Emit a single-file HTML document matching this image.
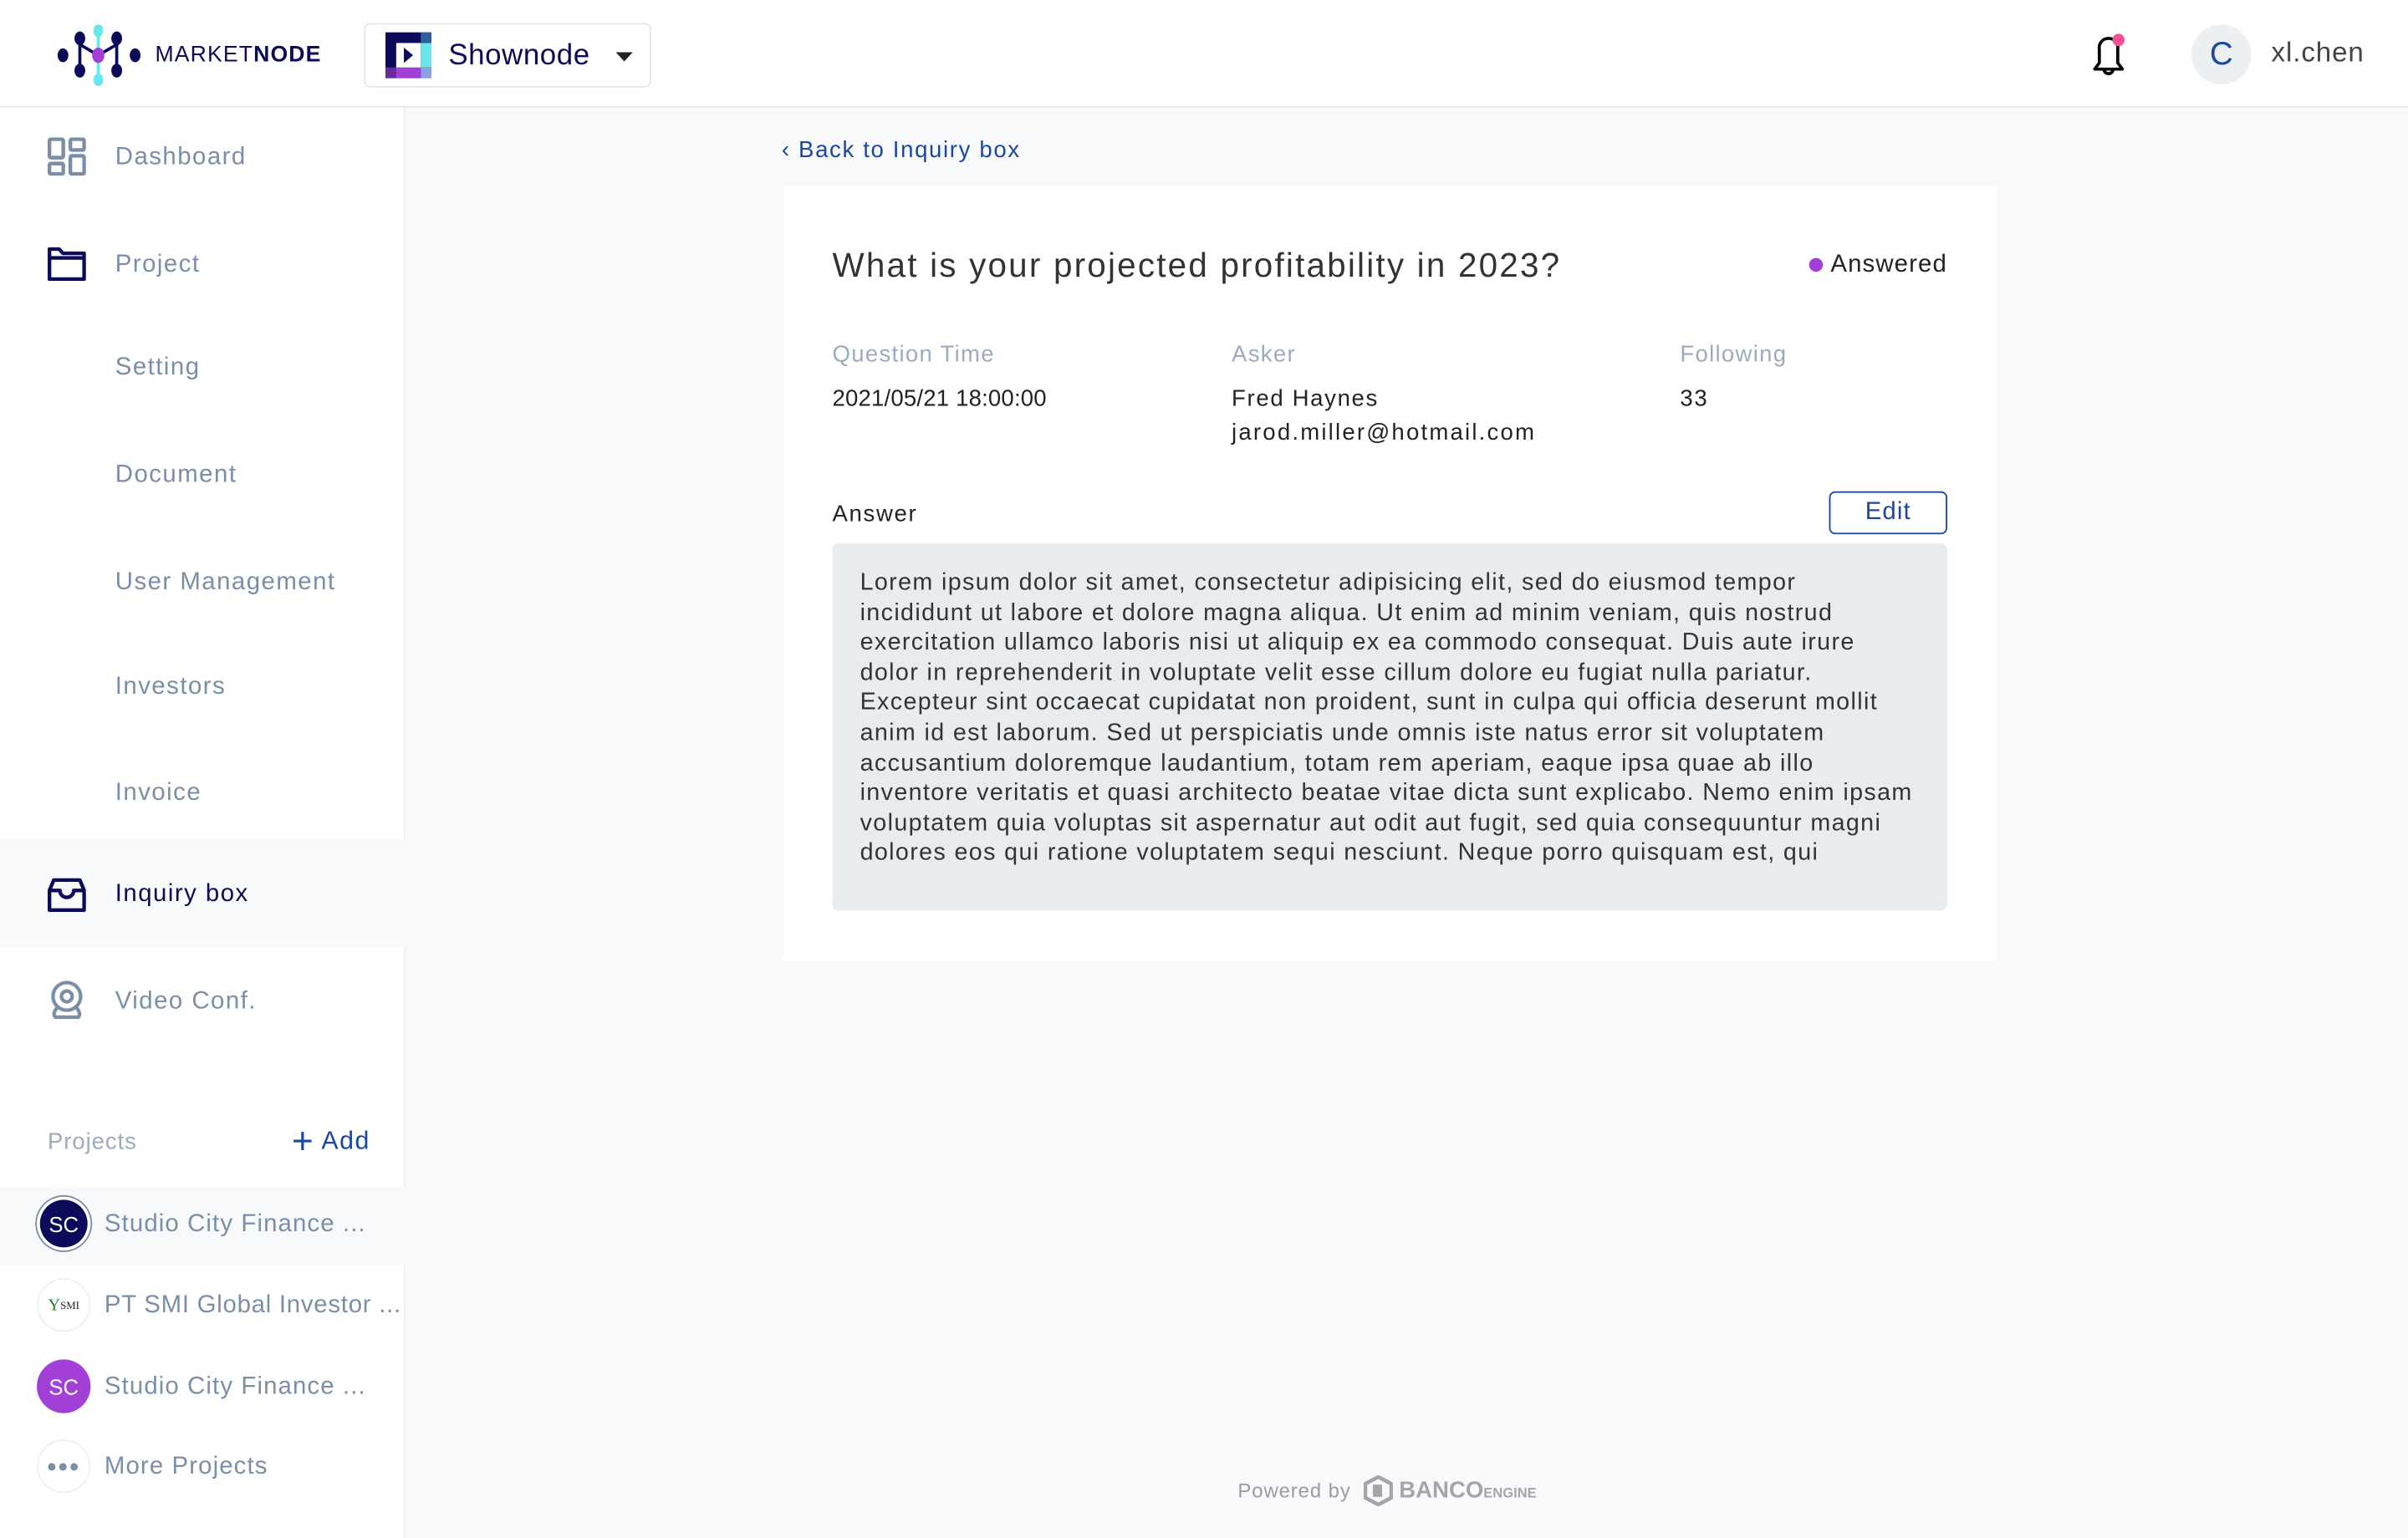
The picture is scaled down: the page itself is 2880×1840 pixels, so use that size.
<!DOCTYPE html>
<html><head><meta charset="utf-8"><style>
*{margin:0;padding:0;box-sizing:border-box}
html,body{width:2880px;height:1840px;overflow:hidden;background:#f7f9fb}
#w{width:1568px;height:1002px;transform:scale(1.836735);transform-origin:0 0;position:relative;font-family:"Liberation Sans",sans-serif;background:#f7f9fb}
.a{position:absolute;white-space:nowrap}
.hdr{position:absolute;left:0;top:0;width:1568px;height:70px;background:#fff;border-bottom:1px solid #e6e9ee}
.side{position:absolute;left:0;top:70px;width:264px;height:932px;background:#fff;border-right:1px solid #eceff3}
.nav{position:absolute;left:75px;font-size:16px;color:#7b8ea8;letter-spacing:.8px;transform:translateY(-45%)}
.ic{position:absolute;left:31px;transform:translateY(-50%)}
.av{position:absolute;left:24px;width:35px;height:35px;border-radius:50%;transform:translateY(-50%);display:flex;align-items:center;justify-content:center;font-size:14px;color:#fff}
.pt{position:absolute;left:68px;font-size:16px;color:#7b8ea8;letter-spacing:.6px;transform:translateY(-45%)}
.lbl{font-size:15px;color:#9aabc1;transform:translateY(-45%);letter-spacing:.7px}
.val{font-size:15px;color:#222;transform:translateY(-45%);letter-spacing:.9px}
.lorem{position:absolute;left:560px;top:370px;font-size:15.6px;line-height:19.6px;color:#333;white-space:nowrap;letter-spacing:.75px}
</style></head><body><div id="w">
<div class="hdr"></div>
<svg class="a" style="left:36px;top:15px" width="58" height="42" viewBox="0 0 58 42">
<line x1="28" y1="3" x2="28" y2="39" stroke="#6be6ea" stroke-width="2"/>
<path d="M16 10 L16 30 M40 10 L40 30 M16 14 L28 21 L40 14" stroke="#0c0b5a" stroke-width="2" fill="none"/>
<rect x="25" y="1" width="6" height="8" rx="3" fill="#6be6ea"/><rect x="25" y="33" width="6" height="8" rx="3" fill="#6be6ea"/>
<ellipse cx="16" cy="10" rx="3.5" ry="4.5" fill="#0c0b5a"/><ellipse cx="40" cy="10" rx="3.5" ry="4.5" fill="#0c0b5a"/>
<ellipse cx="16" cy="31" rx="3.5" ry="4.5" fill="#0c0b5a"/><ellipse cx="40" cy="31" rx="3.5" ry="4.5" fill="#0c0b5a"/>
<ellipse cx="5" cy="21" rx="3.5" ry="4.5" fill="#0c0b5a"/><ellipse cx="52" cy="21" rx="3.5" ry="4.5" fill="#0c0b5a"/>
<ellipse cx="28" cy="21" rx="4" ry="5" fill="#a23fd6"/></svg>
<div class="a" style="left:101px;top:28px;font-size:14.5px;color:#0c0b5a;letter-spacing:.6px">MARKET<b>NODE</b></div>
<div class="a" style="left:237px;top:15px;width:187px;height:42px;border:1px solid #e3e6ea;border-radius:4px;background:#fff"></div>
<svg class="a" style="left:251px;top:21px" width="30" height="30" viewBox="0 0 30 30">
<rect x="0" y="0" width="30" height="30" fill="#0c0b5a"/><rect x="7" y="7" width="16" height="16" fill="#fff"/>
<rect x="23" y="7" width="7" height="16" fill="#6be6ea"/><rect x="23" y="0" width="7" height="7" fill="#2e5f9a"/>
<rect x="0" y="23" width="23" height="7" fill="#a23fd6"/><rect x="23" y="23" width="7" height="7" fill="#8da0e0"/><rect x="0" y="23" width="7" height="7" fill="#6a2a9e"/>
<path d="M12 10 L18 15 L12 20Z" fill="#0c0b5a"/></svg>
<div class="a" style="left:292px;top:26px;font-size:19px;color:#0c0b5a;letter-spacing:.3px">Shownode</div>
<svg class="a" style="left:401px;top:34px" width="11" height="7"><path d="M0 0H11L5.5 6Z" fill="#222"/></svg>
<svg class="a" style="left:1360px;top:20px" width="28" height="30" viewBox="0 0 28 30">
<path d="M7 21 V12 A6 6 0 0 1 13 5 A6 6 0 0 1 19 12 V21 L22 25 H4 Z" fill="none" stroke="#000" stroke-width="2" stroke-linejoin="round"/>
<path d="M10 25 A3 3 0 0 0 16 25" fill="none" stroke="#000" stroke-width="2"/>
<circle cx="19.5" cy="6" r="4" fill="#fb4f93"/></svg>
<div class="a" style="left:1427px;top:16px;width:39px;height:39px;border-radius:50%;background:#edf0f3;color:#1a47a0;font-size:21px;text-align:center;line-height:39px">C</div>
<div class="a" style="left:1479px;top:24px;font-size:18px;color:#444;letter-spacing:.5px">xl.chen</div>

<div class="side"></div>
<div class="a" style="left:0;top:547px;width:264px;height:70px;background:#f7f9fb"></div>
<div class="a" style="left:0;top:773px;width:264px;height:51px;background:#f7f9fb"></div>
<svg class="ic" style="top:102px" width="25" height="25" viewBox="0 0 25 25" fill="none" stroke="#7b8ea8" stroke-width="2.4"><rect x="1.2" y="1.2" width="9" height="12" rx="1"/><rect x="14.8" y="1.2" width="9" height="7" rx="1"/><rect x="1.2" y="17" width="9" height="6.8" rx="1"/><rect x="14.8" y="12" width="9" height="11.8" rx="1"/></svg>
<div class="nav" style="top:102px">Dashboard</div>
<svg class="ic" style="top:172px" width="25" height="22" viewBox="0 0 25 22" fill="none" stroke="#0c0b5a" stroke-width="2.4" stroke-linejoin="round"><path d="M1.2 1.2H7.5L10 4H23.8V20.8H1.2Z M1.2 7H23.8"/></svg>
<div class="nav" style="top:172px">Project</div>
<div class="nav" style="top:239px">Setting</div>
<div class="nav" style="top:309px">Document</div>
<div class="nav" style="top:379px">User Management</div>
<div class="nav" style="top:447px">Investors</div>
<div class="nav" style="top:516px">Invoice</div>
<svg class="ic" style="top:583px" width="25" height="22" viewBox="0 0 25 22" fill="none" stroke="#0c0b5a" stroke-width="2.4" stroke-linejoin="round"><path d="M4 1.2H21L23.8 8V20.8H1.2V8Z M1.2 8H8A4.5 4.5 0 0 0 17 8H23.8"/></svg>
<div class="nav" style="top:582px;color:#0c0b5a">Inquiry box</div>
<svg class="ic" style="top:652px" width="25" height="27" viewBox="0 0 25 27" fill="none" stroke="#7b8ea8" stroke-width="2.3"><circle cx="12.5" cy="10.5" r="9"/><circle cx="12.5" cy="10.5" r="3.5"/><path d="M6 18 Q3 22 5 24 H20 Q22 22 19 18"/></svg>
<div class="nav" style="top:652px">Video Conf.</div>
<div class="a" style="left:31px;top:743px;font-size:15px;color:#9aabc1;transform:translateY(-45%);letter-spacing:.5px">Projects</div>
<div class="a" style="left:190px;top:743px;font-size:16.5px;color:#1a47a0;transform:translateY(-45%);letter-spacing:.8px"><span style="font-size:24px;vertical-align:-3px">+</span> Add</div>
<div class="av" style="top:797px;background:#0c0b5a;box-shadow:0 0 0 2px #fff,0 0 0 3px #7b8ea8;width:31px;height:31px;left:26px">SC</div>
<div class="pt" style="top:797px">Studio City Finance ...</div>
<div class="av" style="top:850px;background:#fff;border:1px solid #eceff3;color:#222;font-size:7px;font-family:'Liberation Serif',serif"><span style="color:#2a7a2a;font-size:11px">Y</span>SMI</div>
<div class="pt" style="top:850px;letter-spacing:.4px">PT SMI Global Investor ...</div>
<div class="av" style="top:903px;background:#a23fd6">SC</div>
<div class="pt" style="top:903px">Studio City Finance ...</div>
<div class="av" style="top:955px;background:#fff;border:1px solid #eceff3;color:#7b8ea8;font-size:18px;letter-spacing:1px;line-height:10px">•••</div>
<div class="pt" style="top:955px">More Projects</div>

<div class="a" style="left:509px;top:97px;font-size:15px;color:#1a47a0;transform:translateY(-45%);letter-spacing:.9px">‹ Back to Inquiry box</div>
<div class="a" style="left:510px;top:121px;width:790px;height:505px;background:#fff"></div>
<div class="a" style="left:542px;top:172px;font-size:22px;color:#333;transform:translateY(-45%);letter-spacing:1.2px">What is your projected profitability in 2023?</div>
<div class="a" style="left:1178px;top:168px;width:9px;height:9px;border-radius:50%;background:#a23fd6"></div>
<div class="a" style="left:1192px;top:172px;font-size:16px;color:#222;transform:translateY(-45%);letter-spacing:.6px">Answered</div>
<div class="a lbl" style="left:542px;top:230px">Question Time</div>
<div class="a lbl" style="left:802px;top:230px">Asker</div>
<div class="a lbl" style="left:1094px;top:230px">Following</div>
<div class="a val" style="left:542px;top:259px;letter-spacing:.1px">2021/05/21 18:00:00</div>
<div class="a val" style="left:802px;top:259px">Fred Haynes</div>
<div class="a val" style="left:802px;top:281px;letter-spacing:1.2px">jarod.miller@hotmail.com</div>
<div class="a val" style="left:1094px;top:259px">33</div>
<div class="a val" style="left:542px;top:334px">Answer</div>
<div class="a" style="left:1191px;top:320px;width:77px;height:28px;border:1.5px solid #1a47a0;border-radius:4px;color:#1a47a0;font-size:16px;text-align:center;line-height:25px;letter-spacing:.6px">Edit</div>
<div class="a" style="left:542px;top:354px;width:726px;height:239px;background:#e9ecef;border-radius:4px"></div>
<div class="lorem">Lorem ipsum dolor sit amet, consectetur adipisicing elit, sed do eiusmod tempor<br>incididunt ut labore et dolore magna aliqua. Ut enim ad minim veniam, quis nostrud<br>exercitation ullamco laboris nisi ut aliquip ex ea commodo consequat. Duis aute irure<br>dolor in reprehenderit in voluptate velit esse cillum dolore eu fugiat nulla pariatur.<br>Excepteur sint occaecat cupidatat non proident, sunt in culpa qui officia deserunt mollit<br>anim id est laborum. Sed ut perspiciatis unde omnis iste natus error sit voluptatem<br>accusantium doloremque laudantium, totam rem aperiam, eaque ipsa quae ab illo<br>inventore veritatis et quasi architecto beatae vitae dicta sunt explicabo. Nemo enim ipsam<br>voluptatem quia voluptas sit aspernatur aut odit aut fugit, sed quia consequuntur magni<br>dolores eos qui ratione voluptatem sequi nesciunt. Neque porro quisquam est, qui</div>

<div class="a" style="left:806px;top:970px;font-size:13px;color:#9a9ca0;transform:translateY(-45%);letter-spacing:.5px">Powered by</div>
<svg class="a" style="left:888px;top:961px" width="19" height="20" viewBox="0 0 19 20"><path d="M9.5 1L18 5.5V14.5L9.5 19L1 14.5V5.5Z" fill="none" stroke="#a3a5a8" stroke-width="2.5"/><rect x="6" y="6" width="6" height="8" fill="#a3a5a8"/></svg>
<div class="a" style="left:911px;top:970px;font-size:15px;font-weight:bold;color:#a3a5a8;transform:translateY(-45%)">BANCO<span style="font-size:9px">ENGINE</span></div>
</div></body></html>
